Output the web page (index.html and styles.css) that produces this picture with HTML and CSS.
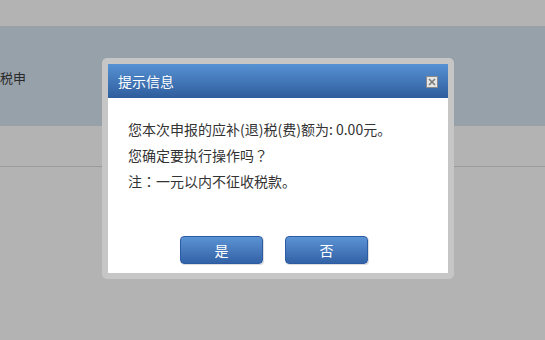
FILE: index.html
```html
<!DOCTYPE html>
<html lang="zh-CN">
<head>
<meta charset="utf-8">
<link rel="stylesheet" href="styles.css">
</head>
<body>
<div class="page">
  <div class="topbar"></div>
  <div class="band"><span class="band-text">税申</span></div>
  <div class="strip"></div>
  <div class="rest"></div>
</div>
<div class="dialog">
  <div class="dialog-inner">
    <div class="dialog-head">
      <span class="dialog-title">提示信息</span>
      <span class="close-btn">
        <svg width="10" height="10" viewBox="0 0 10 10"><path d="M2 2 L8 8 M8 2 L2 8" stroke="#7a7a7a" stroke-width="1.6" fill="none"/></svg>
      </span>
    </div>
    <div class="dialog-body">
      <p class="msg">您本次申报的应补(退)税(费)额为: 0.00元。</p>
      <p class="msg">您确定要执行操作吗<span class="punct" lang="ja">？</span></p>
      <p class="msg">注<span class="punct" lang="ja">：</span>一元以内不征收税款。</p>
    </div>
    <div class="dialog-foot">
      <button class="btn">是</button>
      <button class="btn">否</button>
    </div>
  </div>
</div>
</body>
</html>
```
FILE: styles.css
```css
html, body {
  margin: 0;
  padding: 0;
}
body {
  width: 545px;
  height: 340px;
  overflow: hidden;
  background: #b3b3b3;
  font-family: "Noto Sans CJK SC", "Noto Sans", sans-serif;
  text-spacing-trim: space-all;
  position: relative;
}
.page {
  display: flex;
  flex-direction: column;
}
.topbar {
  height: 26px;
  background: #b3b3b3;
}
.band {
  height: 100px;
  background: #97a1aa;
  display: flex;
  align-items: center;
}
.band-text {
  font-size: 13px;
  color: #2a2a2a;
  margin-top: 2px;
}
.strip {
  height: 40px;
  background: #b3b3b3;
  border-bottom: 1px solid #9a9a9a;
}
.rest {
  flex: 1;
}
.dialog {
  position: absolute;
  left: 102px;
  top: 58px;
  width: 340px;
  padding: 6px;
  background: #c6c6c6;
  border-radius: 5px;
}
.dialog-inner {
  background: #fff;
  height: 209px;
  display: flex;
  flex-direction: column;
}
.dialog-head {
  height: 34px;
  background: linear-gradient(#5692d3, #2f5d9d);
  display: flex;
  align-items: center;
  justify-content: space-between;
  padding: 0 10px 0 10px;
}
.dialog-title {
  color: #fff;
  font-size: 14px;
}
.close-btn {
  width: 10px;
  height: 10px;
  border: 1px solid #8a8a8a;
  background: #e6e6e6;
  display: flex;
  align-items: center;
  justify-content: center;
  margin-top: 2px;
}
.close-btn svg {
  display: block;
}
.dialog-body {
  padding: 18px 20px 0 20px;
}
.msg {
  margin: 0;
  font-size: 14px;
  line-height: 26px;
  color: #333;
}
.punct {
  font-family: "Noto Sans CJK JP", "Noto Sans CJK SC", sans-serif;
}
.dialog-foot {
  display: flex;
  gap: 22px;
  padding: 42px 0 0 72px;
}
.btn {
  width: 83px;
  height: 28px;
  border: 1px solid #2d5ba3;
  border-radius: 4px;
  background: linear-gradient(#5b93d4, #3362a6);
  color: #fff;
  font-family: "Noto Sans CJK SC", sans-serif;
  font-size: 14px;
  padding: 0;
  box-shadow: 1px 1px 1px rgba(0,0,0,0.15);
}
```
